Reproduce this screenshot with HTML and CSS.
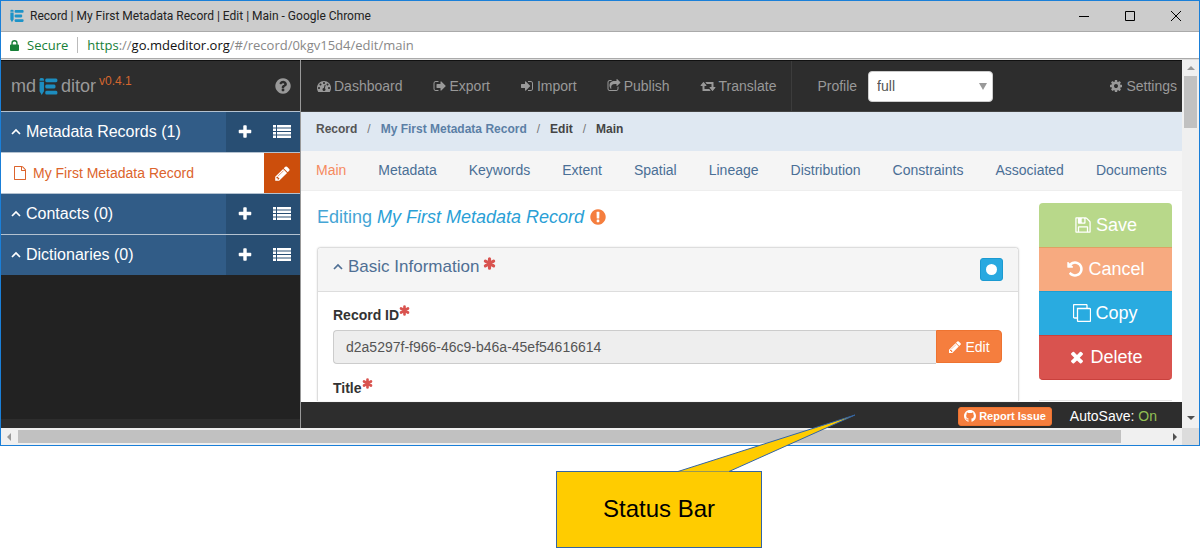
FILE: index.html
```html
<!DOCTYPE html>
<html lang="en">
<head>
<meta charset="utf-8">
<title>Record | My First Metadata Record | Edit | Main</title>
<link rel="stylesheet" href="styles.css">
</head>
<body>
<svg class="defs" aria-hidden="true">
  <symbol id="i-logo" viewBox="0 0 20 18"><path d="M0.500 1.500Q0.500 0 2.800 0T5.200 1.500V3H0.500zM0.500 4h4.700V14L2.800 18 0.500 14zM8 0.500h10q1.500 0 1.500 2T18 4.500H8Q6.500 4.500 6.500 2.500T8 0.500zM8 7h8q1.500 0 1.500 2T16 11H8Q6.500 11 6.500 9T8 7zM8 13.500h10q1.500 0 1.500 2T18 17.500H8Q6.500 17.500 6.500 15.500T8 13.500z"/></symbol>
  <symbol id="i-plus" viewBox="0 0 1792 1792"><path d="M1600 736v192q0 40-28 68t-68 28h-416v416q0 40-28 68t-68 28h-192q-40 0-68-28t-28-68v-416h-416q-40 0-68-28t-28-68v-192q0-40 28-68t68-28h416v-416q0-40 28-68t68-28h192q40 0 68 28t28 68v416h416q40 0 68 28t28 68z"/></symbol>
  <symbol id="i-list" viewBox="0 0 18 14"><path d="M0 0h3v2.500H0zM4 0h14v2.500H4zM0 3.500h3V6H0zM4 3.500h14V6H4zM0 7h3v2.500H0zM4 7h14v2.500H4zM0 10.500h3V13H0zM4 10.500h14V13H4z"/></symbol>
  <symbol id="i-up" viewBox="0 0 12 12"><path d="M2 8l4-4 4 4" fill="none" stroke="currentColor" stroke-width="1.700"/></symbol>
  <symbol id="i-pencil" viewBox="0 0 1792 1792"><path d="M491 1536l91-91-235-235-91 91v107h128v128h107zm523-928q0-22-22-22-10 0-17 7l-542 542q-7 7-7 17 0 22 22 22 10 0 17-7l542-542q7-7 7-17zm-54-192l416 416-832 832h-416v-416zm683 96q0 53-37 90l-166 166-416-416 166-165q36-38 90-38 53 0 91 38l235 234q37 39 37 91z"/></symbol>
  <symbol id="i-file" viewBox="0 0 1792 1792"><path d="M1596 380q28 28 48 76t20 88v1152q0 40-28 68t-68 28h-1344q-40 0-68-28t-28-68v-1600q0-40 28-68t68-28h896q40 0 88 20t76 48zm-444-244v376h376q-10-29-22-41l-313-313q-12-12-41-22zm384 1528v-1024h-416q-40 0-68-28t-28-68v-416h-768v1536h1280z"/></symbol>
  <symbol id="i-help" viewBox="0 0 1792 1792"><path d="M1024 1376v-192q0-14-9-23t-23-9h-192q-14 0-23 9t-9 23v192q0 14 9 23t23 9h192q14 0 23-9t9-23zm256-672q0-88-55.500-163t-138.500-116-170-41q-243 0-371 213-15 24 8 42l132 100q7 6 19 6 16 0 25-12 53-68 86-92 34-24 86-24 48 0 85.500 26t37.500 59q0 38-20 61t-68 45q-63 28-115.500 86.500t-52.500 125.500v36q0 14 9 23t23 9h192q14 0 23-9t9-23q0-19 21.500-49.500t54.500-49.500q32-18 49-28.500t46-35 44.500-48 28-60.500 12.500-81zm384 192q0 209-103 385.500t-279.500 279.500-385.500 103-385.500-103-279.500-279.500-103-385.500 103-385.500 279.500-279.500 385.500-103 385.500 103 279.500 279.500 103 385.500z"/></symbol>
  <symbol id="i-alert" viewBox="0 0 1792 1792"><path d="M896 128q209 0 385.500 103t279.500 279.500 103 385.500-103 385.500-279.500 279.500-385.500 103-385.500-103-279.500-279.500-103-385.500 103-385.500 279.500-279.500 385.500-103zm128 1247v-190q0-14-9-23.500t-22-9.500h-192q-13 0-23 10t-10 23v190q0 13 10 23t23 10h192q13 0 22-9.500t9-23.500zm-2-344l18-621q0-12-10-18-10-8-24-8h-220q-14 0-24 8-10 6-10 18l17 621q0 10 10 17.500t24 7.500h185q14 0 23.500-7.500t10.500-17.500z"/></symbol>
  <symbol id="i-dash" viewBox="0 0 1792 1792"><path d="M384 1152q0-53-37.500-90.500t-90.500-37.500-90.500 37.500-37.500 90.500 37.500 90.500 90.500 37.500 90.500-37.500 37.500-90.500zm192-448q0-53-37.500-90.500t-90.500-37.500-90.500 37.500-37.500 90.500 37.500 90.500 90.500 37.500 90.500-37.500 37.500-90.500zm428 481l101-382q6-26-7.500-48.500t-38.500-29.500-48 6.500-30 39.500l-101 382q-60 5-107 43.500t-63 98.500q-20 77 20 146t117 89 146-20 89-117q16-60-6-117t-72-91zm660-33q0-53-37.500-90.500t-90.500-37.500-90.500 37.500-37.500 90.500 37.500 90.500 90.500 37.500 90.500-37.500 37.500-90.500zm-640-640q0-53-37.500-90.500t-90.500-37.500-90.500 37.500-37.500 90.500 37.500 90.500 90.500 37.500 90.500-37.500 37.500-90.500zm448 192q0-53-37.500-90.500t-90.500-37.500-90.500 37.500-37.500 90.500 37.500 90.500 90.500 37.500 90.500-37.500 37.500-90.500zm320 448q0 261-141 483-19 29-54 29h-1402q-35 0-54-29-141-221-141-483 0-182 71-348t191-286 286-191 348-71 348 71 286 191 191 286 71 348z"/></symbol>
  <symbol id="i-out" viewBox="0 0 1792 1792"><path d="M704 1440q0 4 1 20t.5 26.500-3 23.500-10 19.500-20.500 6.500h-320q-119 0-203.500-84.500t-84.500-203.500v-704q0-119 84.500-203.500t203.500-84.500h320q13 0 22.500 9.500t9.500 22.500q0 4 1 20t.5 26.500-3 23.500-10 19.500-20.500 6.500h-320q-66 0-113 47t-47 113v704q0 66 47 113t113 47h312l11.500 1 11.500 3 8 5.500 7 9 2 13.500zm928-544q0 26-19 45l-544 544q-19 19-45 19t-45-19-19-45v-288h-448q-26 0-45-19t-19-45v-384q0-26 19-45t45-19h448v-288q0-26 19-45t45-19 45 19l544 544q19 19 19 45z"/></symbol>
  <symbol id="i-in" viewBox="0 0 1792 1792"><path d="M1312 896q0 26-19 45l-544 544q-19 19-45 19t-45-19-19-45v-288h-448q-26 0-45-19t-19-45v-384q0-26 19-45t45-19h448v-288q0-26 19-45t45-19 45 19l544 544q19 19 19 45zm352-352v704q0 119-84.500 203.500t-203.500 84.500h-320q-13 0-22.500-9.500t-9.500-22.500q0-4-1-20t-.5-26.500 3-23.500 10-19.500 20.500-6.500h320q66 0 113-47t47-113v-704q0-66-47-113t-113-47h-312l-11.500-1-11.500-3-8-5.500-7-9-2-13.500q0-4-1-20t-.5-26.500 3-23.500 10-19.500 20.500-6.500h320q119 0 203.500 84.500t84.500 203.500z"/></symbol>
  <symbol id="i-share" viewBox="0 0 1792 1792"><path d="M1472 989v259q0 119-84.500 203.500t-203.500 84.500h-832q-119 0-203.500-84.500t-84.500-203.500v-832q0-119 84.500-203.500t203.500-84.500h255q13 0 22.500 9.500t9.500 22.500q0 27-26 32-77 26-133 60-10 4-16 4h-112q-66 0-113 47t-47 113v832q0 66 47 113t113 47h832q66 0 113-47t47-113v-214q0-19 18-29 28-13 54-37 16-16 35-8 21 9 21 29zm237-496l-384 384q-18 19-45 19-12 0-25-5-39-17-39-59v-192h-160q-323 0-438 131-119 137-74 473 3 23-20 34-8 2-12 2-16 0-26-13-10-14-21-31t-39.500-68.500-49.500-99.500-38.500-114-17.500-122q0-49 3.500-91t14-90 28-88 47-81.500 68.500-74 94.500-61.500 124.500-48.500 159.500-30.500 196.500-11h160v-192q0-42 39-59 13-5 25-5 26 0 45 19l384 384q19 19 19 45t-19 45z"/></symbol>
  <symbol id="i-retweet" viewBox="0 0 1920 1792"><path d="M1280 1504q0 13-9.500 22.500t-22.500 9.500h-960q-8 0-13.500-2t-9-7-5.500-8-3-11.500-1-11.500v-600h-192q-26 0-45-19t-19-45q0-24 15-41l320-384q19-22 49-22t49 22l320 384q15 17 15 41 0 26-19 45t-45 19h-192v384h576q16 0 25 11l160 192q7 10 7 21zm640-416q0 24-15 41l-320 384q-20 23-49 23t-49-23l-320-384q-15-17-15-41 0-26 19-45t45-19h192v-384h-576q-16 0-25-12l-160-192q-7-9-7-20 0-13 9.500-22.500t22.500-9.500h960q8 0 13.500 2t9 7 5.500 8 3 11.500 1 11.500v600h192q26 0 45 19t19 45z"/></symbol>
  <symbol id="i-cog" viewBox="0 0 1792 1792"><path d="M1152 896q0-106-75-181t-181-75-181 75-75 181 75 181 181 75 181-75 75-181zm512-109v222q0 12-8 23t-20 13l-185 28q-19 54-39 91 35 50 107 138 10 12 10 25t-9 23q-27 37-99 108t-94 71q-12 0-26-9l-138-108q-44 23-91 38-16 136-29 186-7 28-36 28h-222q-14 0-24.500-8.500t-11.500-21.500l-28-184q-49-16-90-37l-141 107q-10 9-25 9-14 0-25-11-126-114-165-168-7-10-7-23 0-12 8-23 15-21 51-66.500t54-70.500q-27-50-41-99l-183-27q-13-2-21-12.500t-8-23.500v-222q0-12 8-23t19-13l186-28q14-46 39-92-40-57-107-138-10-12-10-24 0-10 9-23 26-36 98.500-107.500t94.500-71.500q13 0 26 10l138 107q44-23 91-38 16-136 29-186 7-28 36-28h222q14 0 24.500 8.500t11.500 21.500l28 184q49 16 90 37l142-107q9-9 24-9 13 0 25 10 129 119 165 170 7 8 7 22 0 12-8 23-15 21-51 66.500t-54 70.500q26 50 41 98l183 28q13 2 21 12.500t8 23.500z"/></symbol>
  <symbol id="i-save" viewBox="0 0 1792 1792"><path d="M512 1536h768v-384h-768v384zm896 0h128v-896q0-14-10-38.500t-20-34.500l-281-281q-10-10-34-20t-39-10v416q0 40-28 68t-68 28h-576q-40 0-68-28t-28-68v-416h-128v1280h128v-416q0-40 28-68t68-28h832q40 0 68 28t28 68v416zm-384-928v-320q0-13-9.500-22.500t-22.500-9.500h-192q-13 0-22.500 9.500t-9.500 22.500v320q0 13 9.500 22.500t22.500 9.500h192q13 0 22.500-9.500t9.500-22.500zm640 32v928q0 40-28 68t-68 28h-1344q-40 0-68-28t-28-68v-1344q0-40 28-68t68-28h928q40 0 88 20t76 48l280 280q28 28 48 76t20 88z"/></symbol>
  <symbol id="i-undo" viewBox="0 0 1792 1792"><path d="M1664 896q0 156-61 298t-164 245-245 164-298 61q-172 0-327-72.500t-264-204.500q-7-10-6.500-22.500t8.500-20.500l137-138q10-9 25-9 16 2 23 12 73 95 179 147t225 52q104 0 198.500-40.500t163.500-109.500 109.500-163.500 40.500-198.500-40.500-198.500-109.500-163.500-163.500-109.500-198.500-40.500q-98 0-188 35.500t-160 101.500l137 138q31 30 14 69-17 40-59 40h-448q-26 0-45-19t-19-45v-448q0-42 40-59 39-17 69 14l130 129q107-101 244.500-156.500t284.500-55.500q156 0 298 61t245 164 164 245 61 298z"/></symbol>
  <symbol id="i-copy" viewBox="0 0 18 18"><path d="M5 4.500h11.500q1 0 1 1v11q0 1-1 1h-11q-1 0-1-1V4.500zM14 4.500V1.500q0-1-1-1H1.500q-1 0-1 1v11.500q0 1 1 1h3" fill="none" stroke="currentColor" stroke-width="1.300"/></symbol>
  <symbol id="i-times" viewBox="0 0 1792 1792"><path d="M1490 1322q0 40-28 68l-136 136q-28 28-68 28t-68-28l-294-294-294 294q-28 28-68 28t-68-28l-136-136q-28-28-28-68t28-68l294-294-294-294q-28-28-28-68t28-68l136-136q28-28 68-28t68 28l294 294 294-294q28-28 68-28t68 28l136 136q28 28 28 68t-28 68l-294 294 294 294q28 28 28 68z"/></symbol>
  <symbol id="i-star" viewBox="0 0 12 12"><path d="M6 1.600v8.800M2.200 3.800l7.600 4.400M9.800 3.800L2.200 8.200" fill="none" stroke="currentColor" stroke-width="2.900" stroke-linecap="round"/></symbol>
  <symbol id="i-lock" viewBox="0 0 10 12"><path d="M1.500 5V3.500a3.500 3.500 0 0 1 7 0V5h.5q1 0 1 1v5q0 1-1 1H1q-1 0-1-1V6q0-1 1-1zM3 5h4V3.500a2 2 0 0 0-4 0z"/></symbol>
  <symbol id="i-github" viewBox="0 0 16 16"><path d="M8 0C3.580 0 0 3.580 0 8c0 3.540 2.290 6.530 5.470 7.590.4.070.55-.17.55-.38 0-.19-.01-.82-.01-1.490-2.010.37-2.530-.49-2.690-.94-.09-.23-.48-.94-.82-1.130-.28-.15-.68-.52-.01-.53.63-.01 1.080.58 1.230.82.72 1.210 1.870.87 2.330.66.070-.52.28-.87.51-1.070-1.780-.2-3.640-.89-3.640-3.950 0-.87.31-1.590.82-2.150-.08-.2-.36-1.020.08-2.120 0 0 .67-.21 2.200.82.64-.18 1.320-.27 2-.27s1.360.09 2 .27c1.530-1.040 2.200-.82 2.200-.82.44 1.100.16 1.920.08 2.120.51.56.82 1.270.82 2.150 0 3.070-1.870 3.750-3.650 3.950.29.25.54.73.54 1.480 0 1.070-.01 1.930-.01 2.200 0 .21.15.46.55.38A8.010 8.010 0 0 0 16 8c0-4.420-3.580-8-8-8z"/></symbol>
</svg>

<div class="window">
  <header class="titlebar">
    <svg class="icon favicon"><use href="#i-logo"/></svg>
    <span class="window-title">Record | My First Metadata Record | Edit | Main - Google Chrome</span>
    <button class="winbtn" aria-label="Minimize"><svg viewBox="0 0 12 12"><path d="M1 6.500h10"/></svg></button>
    <button class="winbtn" aria-label="Maximize"><svg viewBox="0 0 12 12"><path d="M1.500 1.500h9v9h-9z"/></svg></button>
    <button class="winbtn" aria-label="Close"><svg viewBox="0 0 12 12"><path d="M1 1l10 10M11 1L1 11"/></svg></button>
  </header>
  <div class="addressbar">
    <svg class="icon lock"><use href="#i-lock"/></svg>
    <span class="secure">Secure</span>
    <span class="url"><span class="scheme">https</span>://<span class="host">go.mdeditor.org</span>/#/record/0kgv15d4/edit/main</span>
  </div>

  <div class="viewport">
    <aside class="sidebar">
      <div class="brand">
        <span>md</span><svg class="icon brand-logo"><use href="#i-logo"/></svg><span>ditor</span><span class="version">v0.4.1</span>
        <button class="help" aria-label="Help"><svg class="icon"><use href="#i-help"/></svg></button>
      </div>
      <nav class="groups">
        <div class="group">
          <a class="group-name" href="#records"><svg class="icon chevron"><use href="#i-up"/></svg>Metadata Records (1)</a>
          <button class="group-btn" aria-label="Add record"><svg class="icon"><use href="#i-plus"/></svg></button>
          <button class="group-btn" aria-label="List records"><svg class="icon list"><use href="#i-list"/></svg></button>
        </div>
        <div class="group record">
          <a class="record-name" href="#record"><svg class="icon file"><use href="#i-file"/></svg>My First Metadata Record</a>
          <button class="record-btn" aria-label="Edit record"><svg class="icon"><use href="#i-pencil"/></svg></button>
        </div>
        <div class="group">
          <a class="group-name" href="#contacts"><svg class="icon chevron"><use href="#i-up"/></svg>Contacts (0)</a>
          <button class="group-btn" aria-label="Add contact"><svg class="icon"><use href="#i-plus"/></svg></button>
          <button class="group-btn" aria-label="List contacts"><svg class="icon list"><use href="#i-list"/></svg></button>
        </div>
        <div class="group">
          <a class="group-name" href="#dictionaries"><svg class="icon chevron"><use href="#i-up"/></svg>Dictionaries (0)</a>
          <button class="group-btn" aria-label="Add dictionary"><svg class="icon"><use href="#i-plus"/></svg></button>
          <button class="group-btn" aria-label="List dictionaries"><svg class="icon list"><use href="#i-list"/></svg></button>
        </div>
      </nav>
      <div class="sidebar-foot"></div>
    </aside>

    <main class="main">
      <div class="toolbar">
        <a class="tool" href="#dashboard"><svg class="icon"><use href="#i-dash"/></svg>Dashboard</a>
        <a class="tool" href="#export"><svg class="icon"><use href="#i-out"/></svg>Export</a>
        <a class="tool" href="#import"><svg class="icon"><use href="#i-in"/></svg>Import</a>
        <a class="tool" href="#publish"><svg class="icon"><use href="#i-share"/></svg>Publish</a>
        <a class="tool" href="#translate"><svg class="icon wide"><use href="#i-retweet"/></svg>Translate</a>
        <div class="profile">
          <label for="profile">Profile</label>
          <span class="select-wrap"><select id="profile"><option>full</option></select></span>
        </div>
        <a class="tool settings" href="#settings"><svg class="icon"><use href="#i-cog"/></svg>Settings</a>
      </div>
      <nav class="crumbs" aria-label="Breadcrumb">
        <span>Record</span><i>/</i><a href="#record">My First Metadata Record</a><i>/</i><span class="dark">Edit</span><i>/</i><span class="dark">Main</span>
      </nav>
      <nav class="tabs">
        <a class="active" href="#main">Main</a><a href="#metadata">Metadata</a><a href="#keywords">Keywords</a><a href="#extent">Extent</a><a href="#spatial">Spatial</a><a href="#lineage">Lineage</a><a href="#distribution">Distribution</a><a href="#constraints">Constraints</a><a href="#associated">Associated</a><a href="#documents">Documents</a>
      </nav>
      <div class="content">
        <section class="editor">
          <h1>Editing <em>My First Metadata Record</em><svg class="icon alert"><use href="#i-alert"/></svg></h1>
          <div class="panel">
            <div class="panel-head">
              <h2><svg class="icon chevron"><use href="#i-up"/></svg>Basic Information<svg class="icon star"><use href="#i-star"/></svg></h2>
              <button class="dot" aria-label="Show section"></button>
            </div>
            <div class="panel-body">
              <label for="record-id">Record ID<svg class="icon star"><use href="#i-star"/></svg></label>
              <div class="input-group">
                <input id="record-id" type="text" value="d2a5297f-f966-46c9-b46a-45ef54616614" readonly>
                <button class="edit"><svg class="icon"><use href="#i-pencil"/></svg>Edit</button>
              </div>
              <div class="label">Title<svg class="icon star"><use href="#i-star"/></svg></div>
            </div>
          </div>
        </section>
        <div class="side">
          <div class="actions">
            <button class="save"><svg class="icon"><use href="#i-save"/></svg>Save</button>
            <button class="cancel"><svg class="icon"><use href="#i-undo"/></svg>Cancel</button>
            <button class="copy"><svg class="icon"><use href="#i-copy"/></svg>Copy</button>
            <button class="delete"><svg class="icon"><use href="#i-times"/></svg>Delete</button>
          </div>
          <hr>
        </div>
      </div>
      <footer class="status">
        <button class="report"><svg class="icon"><use href="#i-github"/></svg>Report Issue</button>
        <span class="autosave">AutoSave: <span class="on">On</span></span>
      </footer>
    </main>

    <div class="vscroll">
      <span class="arrow up"></span>
      <span class="vthumb"></span>
      <span class="arrow down"></span>
    </div>
  </div>
  <div class="hscroll">
    <span class="arrow left"></span>
    <span class="htrack"><span class="hthumb"></span></span>
    <span class="arrow right"></span>
    <span class="corner"></span>
  </div>
</div>

<div class="annotation">
  <div class="callout">
    <span>Status Bar</span>
    <svg class="tail" viewBox="0 0 178 58"><path d="M0 57.500L177 1 51 57.500" fill="#fc0" stroke="#3465a4"/></svg>
  </div>
</div>
</body>
</html>
```
FILE: styles.css
```css
* { box-sizing: border-box; }
body { margin: 0; background: #fff; color: #333; font: 14px/20px "Liberation Sans", Arial, sans-serif; }
button { margin: 0; padding: 0; border: 0; background: none; color: inherit; font: inherit; display: flex; align-items: center; justify-content: center; }
a { color: inherit; text-decoration: none; }
h1, h2 { margin: 0; font-weight: normal; }
.defs { display: none; }
.icon { width: 14px; height: 14px; fill: currentColor; flex: none; }

.window { border: 1px solid #1a7fd8; }
.titlebar { display: flex; align-items: center; height: 31px; padding-left: 9px; background: #ccc; border-bottom: 1px solid #aaa; }
.favicon { color: #1d93c8; }
.window-title { flex: 1; padding-left: 6px; color: #222; font: 12px/20px Roboto, "Noto Sans", sans-serif; }
.winbtn { width: 46px; height: 30px; }
.winbtn svg { width: 12px; height: 12px; fill: none; stroke: #000; }

.addressbar { display: flex; align-items: center; height: 27px; padding: 0 9px; border-bottom: 1px solid #aaa; color: #888; font: 13px/20px "Open Sans", "Noto Sans", sans-serif; }
.lock { width: 9px; height: 11px; color: #178038; }
.secure { margin-left: 8px; padding-right: 9px; border-right: 1px solid #bbb; color: #178038; line-height: 16px; }
.url { padding-left: 9px; }
.scheme { color: #178038; }
.host { color: #111; }

.viewport { display: grid; grid-template-columns: 300px 1fr 17px; border-top: 1px solid #ddd; }
.sidebar { display: flex; flex-direction: column; background: #222; border-right: 1px solid #999; }
.brand { display: flex; align-items: center; height: 51px; padding: 0 8px 0 10px; background: #2d2d2d; color: #999; font-size: 18px; border-top: 1px solid #111; }
.brand-logo { width: 19px; height: 17px; margin: 0 3px; color: #1d8dbf; }
.version { align-self: flex-start; margin: 10px 0 0 3px; color: #d4662f; font-size: 12px; }
.help { margin-left: auto; }
.help .icon { width: 18px; height: 18px; }
.groups { color: #fff; }
.group { display: flex; height: 41px; border-top: 1px solid #b4c2d0; font-size: 16px; background: #315c87; }
.group-name { display: flex; flex: 1; align-items: center; padding-left: 9px; }
.chevron { width: 12px; height: 12px; margin-right: 4px; }
.group-btn { width: 37px; background: #284e73; }
.group-btn .icon { width: 16px; height: 16px; }
.group-btn .list { width: 18px; height: 14px; }
.record { background: #fff; color: #dc642c; font-size: 14px; }
.record-name { display: flex; flex: 1; align-items: center; padding-left: 12px; }
.file { margin-right: 6px; }
.record-btn { width: 36px; background: #cc4e0c; color: #fff; }
.record-btn .icon { width: 17px; height: 17px; }
.sidebar-foot { height: 9px; margin-top: auto; background: #2d2d2d; }

.main { min-width: 0; background: #fff; }
.toolbar { display: flex; align-items: center; height: 52px; padding-left: 1px; background: #2d2d2d; border-top: 1px solid #111; border-bottom: 1px solid #444; color: #999; }
.tool { display: flex; align-items: center; gap: 3px; padding: 0 15px; }
.toolbar .wide { width: 16px; }
.profile { display: flex; align-self: stretch; align-items: center; gap: 11px; padding-left: 25px; border-left: 1px solid #3c3c3c; }
.select-wrap { position: relative; }
.select-wrap::after { content: ""; position: absolute; right: 6px; top: 12px; border: 4px solid transparent; border-top: 7px solid #999; border-bottom: 0; pointer-events: none; }
.profile select { appearance: none; width: 125px; height: 31px; padding: 0 8px; border: 1px solid #ccc; border-radius: 4px; background: #fff; color: #555; font: inherit; display: block; }
.settings { margin-left: auto; padding: 0 5px; }
.crumbs { display: flex; height: 39px; padding: 7px 15px; background: #dfe8f2; color: #555; font-size: 12px; font-weight: bold; }
.crumbs a { color: #5b7fa6; }
.crumbs i { padding: 0 10px; color: #777; font-style: normal; font-weight: normal; }
.crumbs .dark { color: #444; }
.tabs { display: flex; gap: 32px; height: 40px; padding: 9px 15px; background: #f5f5f5; border-bottom: 1px solid #eee; color: #4a6f96; }
.tabs .active { color: #f58a60; }

.content { display: flex; gap: 20px; padding: 12px 10px 0 16px; }
.editor { flex: 1; min-width: 0; }
h1 { display: flex; align-items: center; gap: 5px; height: 28px; color: #45a5d5; font-size: 18px; }
h1 em { color: #2a9fd6; }
.alert { width: 18px; height: 18px; color: #f57e3e; }
.panel { margin-top: 16px; border: 1px solid #ddd; border-bottom: 0; border-radius: 4px 4px 0 0; box-shadow: 0 0 2px #ddd; }
.panel-head { display: flex; justify-content: space-between; height: 44px; padding: 9px 15px 9px 14px; background: #f5f5f5; border-bottom: 1px solid #ddd; border-radius: 4px 4px 0 0; color: #4f6f94; }
.panel-head h2 { display: flex; font-size: 17px; }
.panel-head .chevron { margin-top: 4px; }
.panel-head .star { margin-left: 4px; }
.star { width: 13px; height: 13px; color: #d9534f; }
.dot { width: 23px; height: 23px; margin-top: 1px; border: 1px solid #1b9ad1; border-radius: 3px; background: #29a9e0; }
.dot::before { content: ""; width: 11px; height: 11px; border-radius: 50%; background: #fff; }
.panel-body { padding: 13px 16px 3px 15px; }
.panel-body label, .label { display: flex; font-weight: bold; }
.panel-body .star { width: 11px; height: 11px; }
.input-group { display: flex; margin: 5px 0 14px; }
.input-group input { flex: 1; min-width: 0; height: 34px; padding: 0 12px; border: 1px solid #ccc; border-right: 0; border-radius: 4px 0 0 4px; background: #eee; color: #555; font: inherit; }
.edit { gap: 3px; width: 66px; height: 33px; border: 1px solid #ee7330; border-radius: 0 4px 4px 0; background: #f57e3e; color: #fff; }
.side { width: 133px; }
.actions button { width: 100%; height: 44px; gap: 4px; padding-bottom: 2px; border-top: 1px solid transparent; color: #fff; font-size: 18px; }
.actions .icon { width: 18px; height: 18px; }
.actions .save { background: #b8d88a; border-radius: 4px 4px 0 0; }
.actions .cancel { background: #f7aa80; border-color: #e0a063; }
.actions .copy { background: #29abe0; border-color: #1b9fd4; }
.actions .delete { height: 45px; background: #d9534f; border-color: #c9413d; border-radius: 0 0 4px 4px; border-bottom: 1px solid #c9413d; }
.side hr { height: 1px; margin: 20px 0 1px; border: 0; background: #e4e4e4; }
.status { display: flex; align-items: center; justify-content: flex-end; gap: 18px; height: 26px; padding: 2px 25px 0 0; background: #2d2d2d; color: #fff; }
.report { gap: 3px; height: 19px; padding: 0 5px; border: 1px solid #ee7330; border-radius: 3px; background: #f57e3e; font-size: 11px; font-weight: bold; }
.report .icon { width: 12px; height: 12px; }
.on { color: #93c054; }

.vscroll { display: flex; flex-direction: column; align-items: center; padding: 6px 0 8px; background: #f0f0f0; }
.vthumb { width: 13px; height: 52px; margin-top: 6px; background: #c1c1c1; }
.arrow { width: 0; height: 0; border: 4px solid transparent; }
.up { border-top: 0; border-bottom-color: #999; }
.down { margin-top: auto; border-bottom: 0; border-top-color: #505050; }
.hscroll { display: flex; align-items: center; height: 17px; background: #f0f0f0; }
.left { margin-left: 6px; border-left: 0; border-right-color: #999; }
.htrack { flex: 1; padding: 0 52px 0 7px; }
.hthumb { display: block; height: 13px; background: #c1c1c1; }
.right { border-right: 0; border-left-color: #505050; }
.corner { align-self: stretch; width: 17px; margin-left: 5px; background: #dcdcdc; }

.annotation { display: grid; grid-template-columns: 556fr 206fr 438fr; padding-top: 25px; }
.callout { position: relative; grid-column: 2; padding: 17px 0 19px; border: 1px solid #3465a4; background: #fc0; color: #000; font-size: 24px; line-height: 39px; text-align: center; }
.tail { position: absolute; left: 121px; top: -58px; width: 178px; height: 58px; }
```
